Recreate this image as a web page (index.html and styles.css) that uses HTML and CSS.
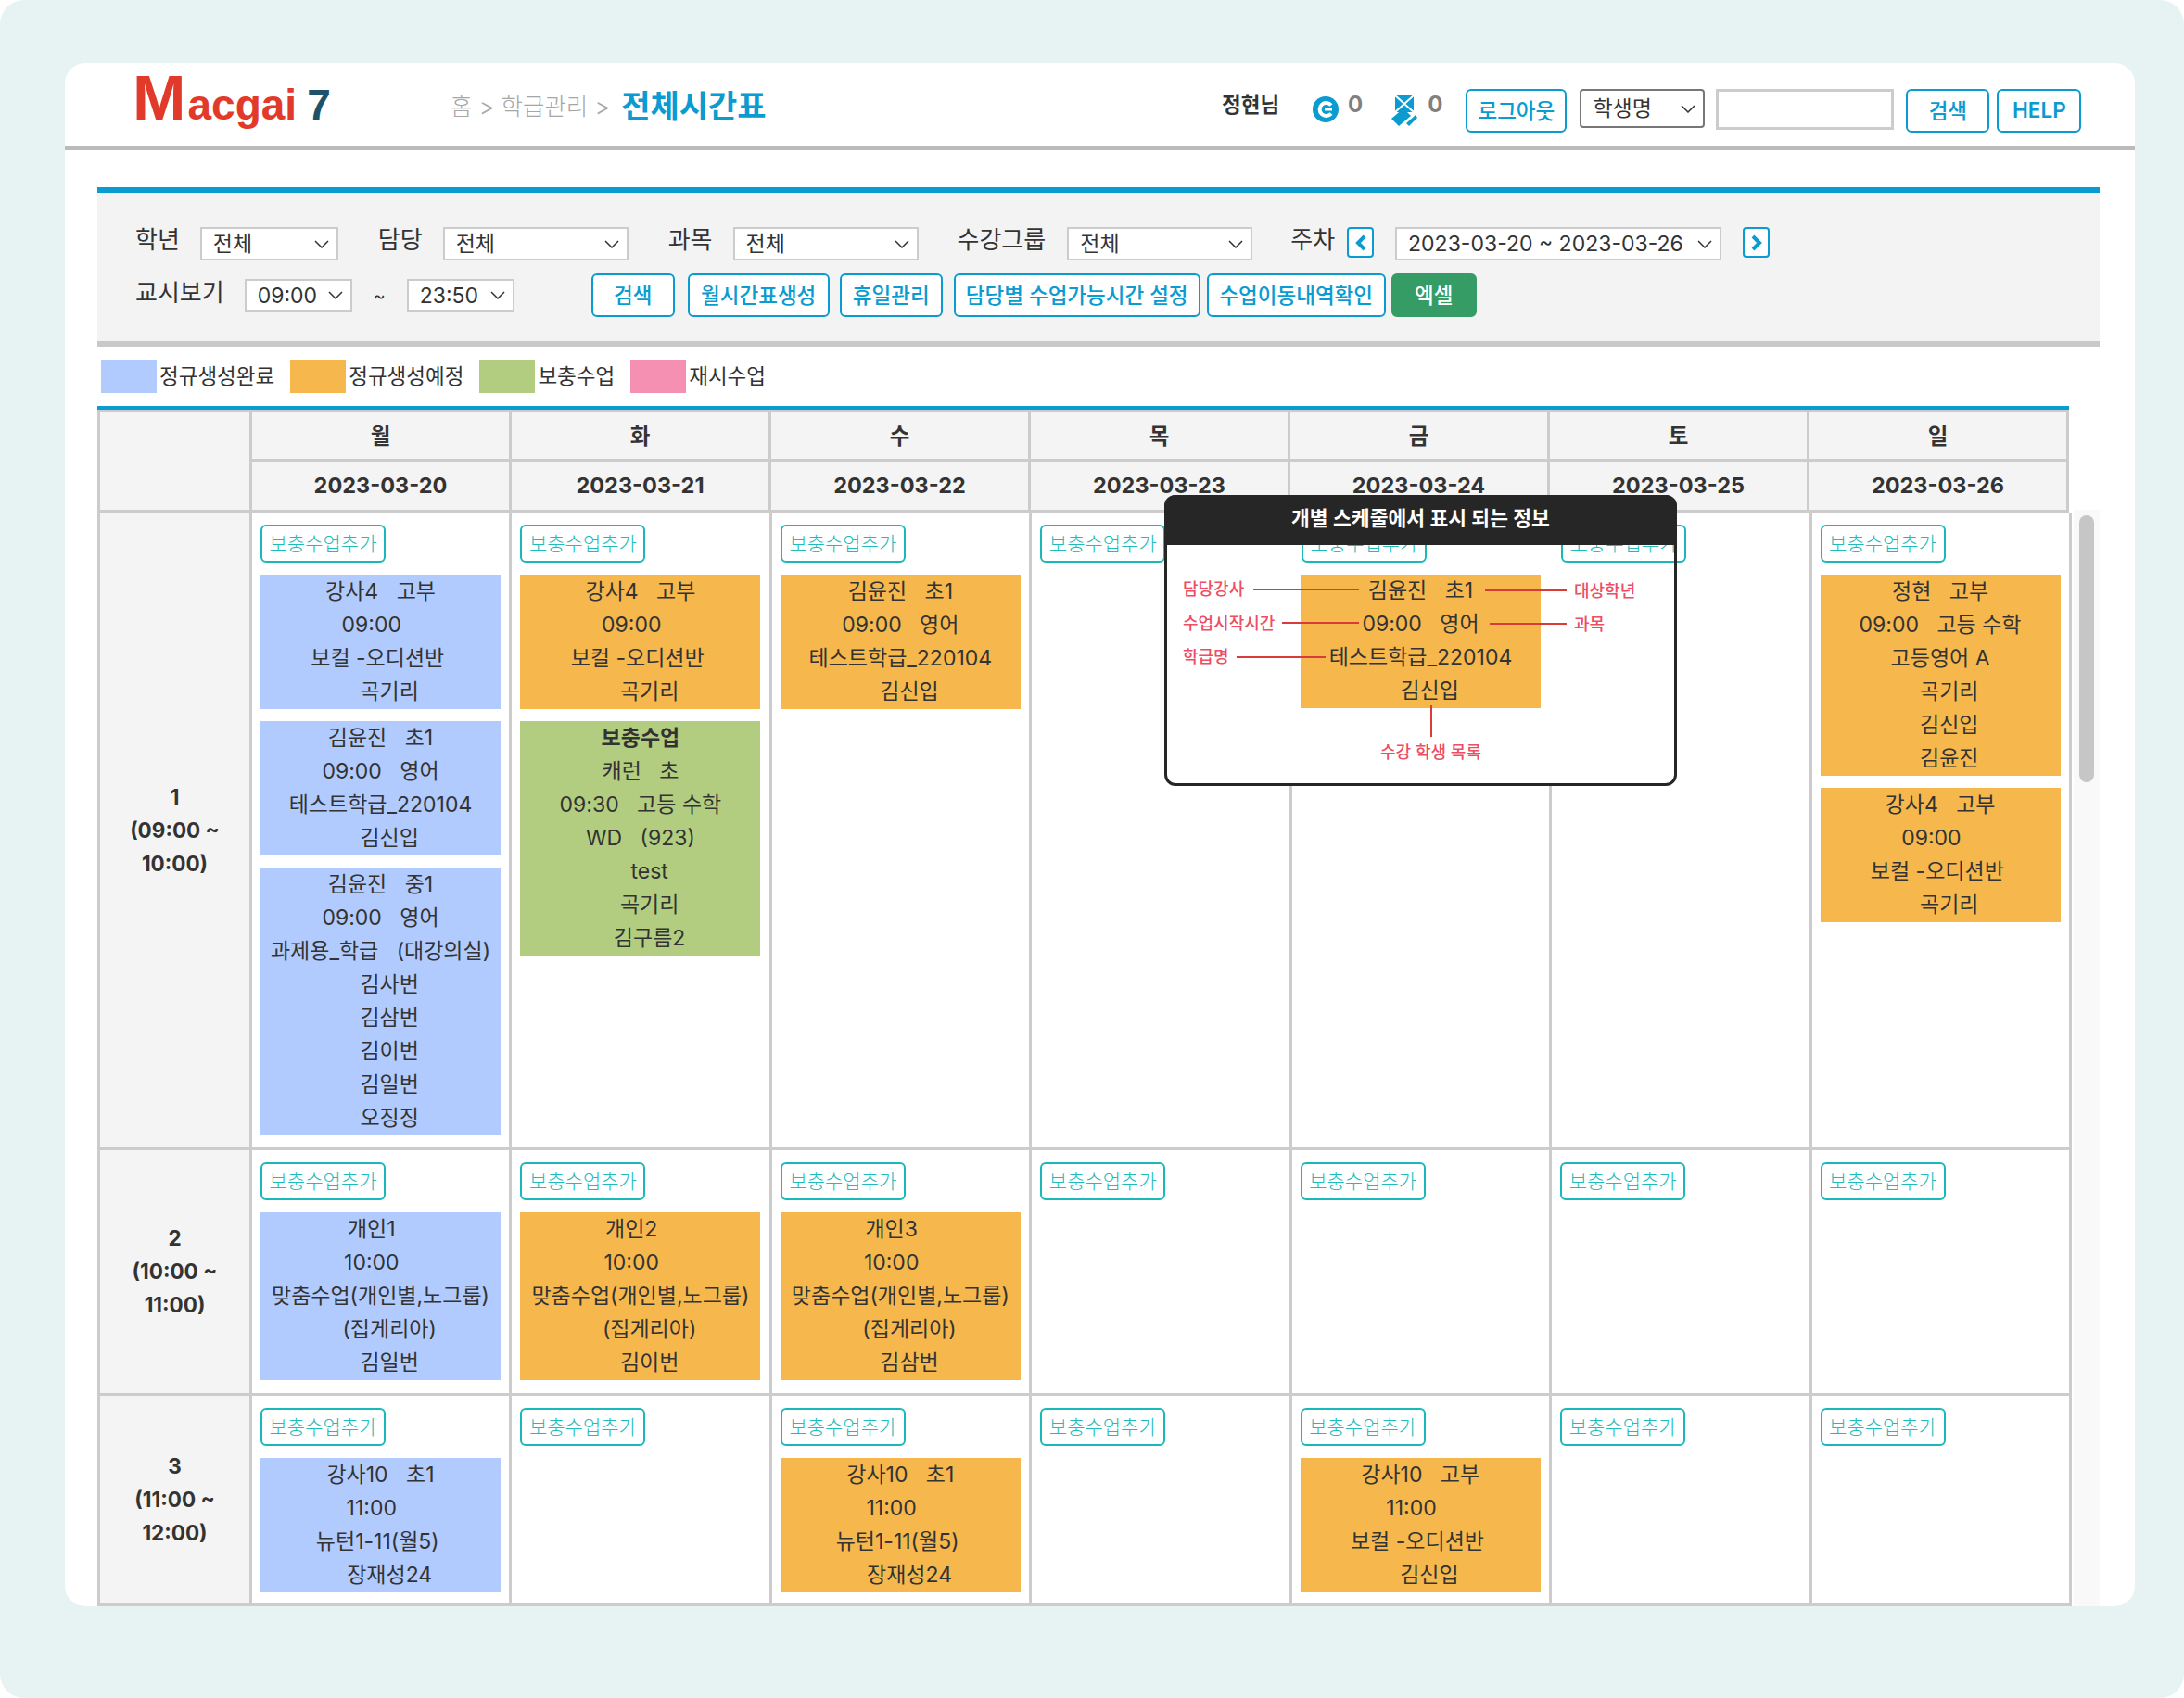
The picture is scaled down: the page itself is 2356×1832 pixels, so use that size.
FILE: index.html
```html
<!DOCTYPE html>
<html lang="ko">
<head>
  <meta charset="UTF-8" />
  <title>전체시간표</title>
  <link rel="stylesheet" href="styles.css">
</head>
<body>
<div class="screen">
  <div class="card">

    <!-- 상단 헤더 -->
    <header class="top">
      <div class="logo"><span class="logo-m">M</span><span class="logo-rest">acgai</span><span class="logo-7">7</span></div>
      <nav class="crumb">
        <span>홈 &gt; 학급관리 &gt;</span>
        <strong>전체시간표</strong>
      </nav>
      <div class="user">
        <b class="user-name">정현님</b>
        <svg class="ico-coin" viewBox="0 0 28 28">
          <circle cx="14" cy="14" r="14" fill="#0a9bd0" />
          <path d="M20 9.5A7 7 0 1 0 20 18.5" fill="none" stroke="#fff" stroke-width="4" />
          <path d="M13 14H21" stroke="#fff" stroke-width="3" />
        </svg>
        <span class="count">0</span>
        <svg class="ico-ribbon" viewBox="0 0 30 34">
          <rect x="5" y="0" width="20" height="18" fill="#0a9bd0" />
          <path d="M5 0L25 18M25 0L5 18" stroke="#fff" stroke-width="2" />
          <path d="M1 25L14 14L22 22L9 33Z" fill="#0a9bd0" />
          <path d="M17 30L27 21L29 24L20 33Z" fill="#0a9bd0" />
        </svg>
        <span class="count">0</span>
        <button class="btn btn-logout">로그아웃</button>
        <select class="sel sel-top"><option>학생명</option></select>
        <input class="top-input" type="text" />
        <button class="btn btn-find">검색</button>
        <button class="btn btn-help">HELP</button>
      </div>
    </header>

    <!-- 검색 조건 -->
    <section class="filter">
      <div class="filter-row">
        <label class="f-label">학년</label>
        <select class="sel sel-grade"><option>전체</option></select>
        <label class="f-label">담당</label>
        <select class="sel sel-wide"><option>전체</option></select>
        <label class="f-label">과목</label>
        <select class="sel sel-wide"><option>전체</option></select>
        <label class="f-label f-label-group">수강그룹</label>
        <select class="sel sel-wide"><option>전체</option></select>
        <label class="f-label f-label-week">주차</label>
        <button class="nav-btn nav-prev"><svg viewBox="0 0 12 18"><path d="M10 2L3 9L10 16" /></svg></button>
        <select class="sel sel-week"><option>2023-03-20 ~ 2023-03-26</option></select>
        <button class="nav-btn nav-next"><svg viewBox="0 0 12 18"><path d="M2 2L9 9L2 16" /></svg></button>
      </div>
      <div class="filter-row filter-row-2">
        <label class="f-label f-label-time">교시보기</label>
        <select class="sel sel-time"><option>09:00</option></select>
        <span class="tilde">~</span>
        <select class="sel sel-time"><option>23:50</option></select>
        <div class="actions">
          <button class="btn">검색</button>
          <button class="btn">월시간표생성</button>
          <button class="btn">휴일관리</button>
          <button class="btn">담당별 수업가능시간 설정</button>
          <button class="btn">수업이동내역확인</button>
          <button class="btn btn-excel">엑셀</button>
        </div>
      </div>
    </section>

    <!-- 범례 -->
    <div class="legend">
      <i class="swatch c-blue"></i><span>정규생성완료</span>
      <i class="swatch c-orange"></i><span>정규생성예정</span>
      <i class="swatch c-green"></i><span>보충수업</span>
      <i class="swatch c-pink"></i><span>재시수업</span>
    </div>

    <!-- 시간표 머리글 -->
    <div class="tt-head">
      <div class="th th-corner"></div>
      <div class="th">월</div><div class="th">화</div><div class="th">수</div><div class="th">목</div><div class="th">금</div><div class="th">토</div><div class="th">일</div>
      <div class="th">2023-03-20</div><div class="th">2023-03-21</div><div class="th">2023-03-22</div><div class="th">2023-03-23</div><div class="th">2023-03-24</div><div class="th">2023-03-25</div><div class="th">2023-03-26</div>
    </div>

    <div class="tt-wrap">
      <div class="tt-body">

        <!-- 1교시 -->
        <div class="td-time"><div>1</div><div>(09:00 ~</div><div>10:00)</div></div>
        <div class="td">
          <button class="add-btn">보충수업추가</button>
          <div class="block c-blue">
            <div>강사4 &nbsp; 고부</div><div>09:00&nbsp;&nbsp;&nbsp;</div><div>보컬 -오디션반&nbsp;</div><div>&nbsp;&nbsp;&nbsp;곡기리</div>
          </div>
          <div class="block c-blue">
            <div>김윤진 &nbsp; 초1</div><div>09:00 &nbsp; 영어</div><div>테스트학급_220104</div><div>&nbsp;&nbsp;&nbsp;김신입</div>
          </div>
          <div class="block c-blue">
            <div>김윤진 &nbsp; 중1</div><div>09:00 &nbsp; 영어</div><div>과제용_학급 &nbsp; (대강의실)</div><div>&nbsp;&nbsp;&nbsp;김사번</div><div>&nbsp;&nbsp;&nbsp;김삼번</div><div>&nbsp;&nbsp;&nbsp;김이번</div><div>&nbsp;&nbsp;&nbsp;김일번</div><div>&nbsp;&nbsp;&nbsp;오징징</div>
          </div>
        </div>
        <div class="td">
          <button class="add-btn">보충수업추가</button>
          <div class="block c-orange">
            <div>강사4 &nbsp; 고부</div><div>09:00&nbsp;&nbsp;&nbsp;</div><div>보컬 -오디션반&nbsp;</div><div>&nbsp;&nbsp;&nbsp;곡기리</div>
          </div>
          <div class="block c-green">
            <div><b>보충수업</b></div><div>캐런 &nbsp; 초</div><div>09:30 &nbsp; 고등 수학</div><div>WD &nbsp; (923)</div><div>&nbsp;&nbsp;&nbsp;test</div><div>&nbsp;&nbsp;&nbsp;곡기리</div><div>&nbsp;&nbsp;&nbsp;김구름2</div>
          </div>
        </div>
        <div class="td">
          <button class="add-btn">보충수업추가</button>
          <div class="block c-orange">
            <div>김윤진 &nbsp; 초1</div><div>09:00 &nbsp; 영어</div><div>테스트학급_220104</div><div>&nbsp;&nbsp;&nbsp;김신입</div>
          </div>
        </div>
        <div class="td"><button class="add-btn">보충수업추가</button></div>
        <div class="td"></div>
        <div class="td"></div>
        <div class="td">
          <button class="add-btn">보충수업추가</button>
          <div class="block c-orange">
            <div>정현 &nbsp; 고부</div><div>09:00 &nbsp; 고등 수학</div><div>고등영어 A</div><div>&nbsp;&nbsp;&nbsp;곡기리</div><div>&nbsp;&nbsp;&nbsp;김신입</div><div>&nbsp;&nbsp;&nbsp;김윤진</div>
          </div>
          <div class="block c-orange">
            <div>강사4 &nbsp; 고부</div><div>09:00&nbsp;&nbsp;&nbsp;</div><div>보컬 -오디션반&nbsp;</div><div>&nbsp;&nbsp;&nbsp;곡기리</div>
          </div>
        </div>

        <!-- 2교시 -->
        <div class="td-time"><div>2</div><div>(10:00 ~</div><div>11:00)</div></div>
        <div class="td">
          <button class="add-btn">보충수업추가</button>
          <div class="block c-blue">
            <div>개인1&nbsp;&nbsp;&nbsp;</div><div>10:00&nbsp;&nbsp;&nbsp;</div><div>맞춤수업(개인별,노그룹)</div><div>&nbsp;&nbsp;&nbsp;(집게리아)</div><div>&nbsp;&nbsp;&nbsp;김일번</div>
          </div>
        </div>
        <div class="td">
          <button class="add-btn">보충수업추가</button>
          <div class="block c-orange">
            <div>개인2&nbsp;&nbsp;&nbsp;</div><div>10:00&nbsp;&nbsp;&nbsp;</div><div>맞춤수업(개인별,노그룹)</div><div>&nbsp;&nbsp;&nbsp;(집게리아)</div><div>&nbsp;&nbsp;&nbsp;김이번</div>
          </div>
        </div>
        <div class="td">
          <button class="add-btn">보충수업추가</button>
          <div class="block c-orange">
            <div>개인3&nbsp;&nbsp;&nbsp;</div><div>10:00&nbsp;&nbsp;&nbsp;</div><div>맞춤수업(개인별,노그룹)</div><div>&nbsp;&nbsp;&nbsp;(집게리아)</div><div>&nbsp;&nbsp;&nbsp;김삼번</div>
          </div>
        </div>
        <div class="td"><button class="add-btn">보충수업추가</button></div>
        <div class="td"><button class="add-btn">보충수업추가</button></div>
        <div class="td"><button class="add-btn">보충수업추가</button></div>
        <div class="td"><button class="add-btn">보충수업추가</button></div>

        <!-- 3교시 -->
        <div class="td-time"><div>3</div><div>(11:00 ~</div><div>12:00)</div></div>
        <div class="td">
          <button class="add-btn">보충수업추가</button>
          <div class="block c-blue">
            <div>강사10 &nbsp; 초1</div><div>11:00&nbsp;&nbsp;&nbsp;</div><div>뉴턴1-11(월5)&nbsp;</div><div>&nbsp;&nbsp;&nbsp;장재성24</div>
          </div>
        </div>
        <div class="td"><button class="add-btn">보충수업추가</button></div>
        <div class="td">
          <button class="add-btn">보충수업추가</button>
          <div class="block c-orange">
            <div>강사10 &nbsp; 초1</div><div>11:00&nbsp;&nbsp;&nbsp;</div><div>뉴턴1-11(월5)&nbsp;</div><div>&nbsp;&nbsp;&nbsp;장재성24</div>
          </div>
        </div>
        <div class="td"><button class="add-btn">보충수업추가</button></div>
        <div class="td">
          <button class="add-btn">보충수업추가</button>
          <div class="block c-orange">
            <div>강사10 &nbsp; 고부</div><div>11:00&nbsp;&nbsp;&nbsp;</div><div>보컬 -오디션반&nbsp;</div><div>&nbsp;&nbsp;&nbsp;김신입</div>
          </div>
        </div>
        <div class="td"><button class="add-btn">보충수업추가</button></div>
        <div class="td"><button class="add-btn">보충수업추가</button></div>
      </div>

      <div class="scroll"><div class="scroll-thumb"></div></div>
    </div>

    <!-- 안내 팝업 -->
    <div class="popup">
      <div class="popup-canvas">
        <button class="add-btn pop-fri">보충수업추가</button>
        <button class="add-btn pop-sat">보충수업추가</button>
        <div class="block c-orange pop-block">
          <div>김윤진 &nbsp; 초1</div><div>09:00 &nbsp; 영어</div><div>테스트학급_220104</div><div>&nbsp;&nbsp;&nbsp;김신입</div>
        </div>
        <span class="note n1">담당강사</span><i class="line l1"></i>
        <span class="note n2">수업시작시간</span><i class="line l2"></i>
        <span class="note n3">학급명</span><i class="line l3"></i>
        <span class="note n4">대상학년</span><i class="line l4"></i>
        <span class="note n5">과목</span><i class="line l5"></i>
        <i class="line l6"></i><span class="note n6">수강 학생 목록</span>
      </div>
      <div class="popup-title">개별 스케줄에서 표시 되는 정보</div>
    </div>

  </div>
</div>
</body>
</html>
```

FILE: styles.css
```css
* {
  box-sizing: border-box;
}
html, body {
  margin: 0;
  background: #fff;
}
body {
  font-family: Inter, "Noto Sans CJK KR", sans-serif;
  color: #333;
  font-size: 22px;
}
button, select, input {
  font-family: inherit;
}
.screen {
  width: 2356px;
  height: 1832px;
  padding: 68px 53px 100px 70px;
  background: #e7f3f3;
  border-radius: 26px;
}
.card {
  position: relative;
  width: 2233px;
  height: 1665px;
  background: #fff;
  border-radius: 22px;
  overflow: hidden;
}

/* header */
.top {
  display: flex;
  align-items: flex-start;
  height: 94px;
  border-bottom: 4px solid #bbb;
}
.logo {
  width: 343px;
  margin-left: 73px;
  display: flex;
  align-items: baseline;
  height: 76px;
  font-family: "Liberation Sans", sans-serif;
  font-weight: bold;
  color: #e23a2a;
  line-height: 76px;
}
.logo-m {
  font-size: 69px;
}
.logo-rest {
  font-size: 46px;
  margin-left: 2px;
}
.logo-7 {
  font-size: 46px;
  margin-left: 11px;
  color: #1d5268;
}
.crumb {
  width: 832px;
  display: flex;
  align-items: center;
  gap: 12px;
  height: 94px;
  margin-top: -3px;
  color: #a6a6a6;
  font-size: 25.5px;
  font-weight: 300;
}
.crumb strong {
  font-size: 34px;
  font-weight: 700;
  color: #0a9bd0;
}
.user {
  display: flex;
  align-items: flex-start;
  padding-top: 28px;
}
.user-name {
  font-size: 22.5px;
  line-height: 34px;
  width: 98px;
}
.ico-coin {
  width: 28px;
  height: 28px;
  margin-top: 8px;
}
.count {
  font-size: 24px;
  font-weight: 700;
  line-height: 34px;
  color: #808080;
  margin-left: 10px;
}
.ico-ribbon {
  width: 30px;
  height: 34px;
  margin: 7px 0 0 30px;
}
.btn {
  height: 47px;
  padding: 0 0 3px;
  background: #fff;
  border: 2px solid #0a9bd0;
  border-radius: 6px;
  color: #0a9bd0;
  font-size: 22.5px;
  font-weight: 500;
}
.btn-logout {
  width: 109px;
  margin-left: 25px;
}
.top-input {
  width: 192px;
  height: 44px;
  margin-left: 12px;
  border: 3px solid #ccc;
}
.btn-find {
  width: 90px;
  margin-left: 13px;
}
.btn-help {
  width: 91px;
  margin-left: 8px;
  font-weight: 600;
}

/* filter */
.filter {
  width: 2160px;
  height: 172px;
  margin: 40px 0 0 35px;
  padding: 37px 0 0 41px;
  background: #f3f3f3;
  border-top: 6px solid #0a9bd0;
  border-bottom: 6px solid #c9c9c9;
}
.filter-row {
  display: flex;
  align-items: flex-start;
}
.filter-row-2 {
  margin-top: 14px;
  align-items: center;
}
.f-label {
  font-size: 26px;
  line-height: 28px;
  margin-right: 22px;
}
.f-label-group {
  margin-left: -1px;
  margin-right: 23px;
}
.f-label-week {
  margin-right: 13px;
}
.f-label-time {
  margin-bottom: 6px;
}
.sel {
  height: 36px;
  padding: 0 0 0 12px;
  background: #fff url("data:image/svg+xml,%3Csvg xmlns='http://www.w3.org/2000/svg' width='16' height='9'%3E%3Cpath d='M1 1L8 8L15 1' fill='none' stroke='%23333' stroke-width='1.5'/%3E%3C/svg%3E") no-repeat right 8px center;
  border: 2px solid #ccc;
  color: #333;
  font-size: 23px;
  appearance: none;
}
.sel-grade {
  width: 149px;
  margin-right: 43px;
}
.sel-wide {
  width: 200px;
  margin-right: 43px;
}
.sel-week {
  width: 352px;
  margin: 0 23px;
}
.sel-time {
  width: 116px;
}
.sel.sel-top {
  width: 135px;
  height: 42px;
  margin-left: 14px;
  border: 2px solid #777;
  border-radius: 4px;
}
.filter-row .sel:nth-of-type(4) {
  margin-right: 41px;
}
.nav-btn {
  width: 29px;
  height: 33px;
  padding: 0;
  background: #fff;
  border: 2px solid #0a9bd0;
  border-radius: 4px;
  display: flex;
  align-items: center;
  justify-content: center;
}
.nav-btn svg {
  width: 12px;
  height: 18px;
}
.nav-btn path {
  fill: none;
  stroke: #0a9bd0;
  stroke-width: 4;
}
.tilde {
  width: 59px;
  text-align: center;
  font-size: 20px;
}
.actions {
  display: flex;
  margin-left: 83px;
}
.actions .btn:nth-child(1) { width: 90px; }
.actions .btn:nth-child(2) { width: 153px; margin-left: 14px; }
.actions .btn:nth-child(3) { width: 111px; margin-left: 11px; }
.actions .btn:nth-child(4) { width: 266px; margin-left: 12px; }
.actions .btn:nth-child(5) { width: 193px; margin-left: 7px; }
.actions .btn:nth-child(6) { width: 92px; margin-left: 6px; }
.btn.btn-excel {
  background: #359c66;
  border-color: #359c66;
  color: #fff;
}

/* legend */
.legend {
  display: flex;
  align-items: center;
  height: 64px;
  margin-left: 39px;
  font-size: 22.5px;
}
.swatch {
  width: 60px;
  height: 36px;
  margin-right: 3px;
}
.legend span {
  margin: 0 17px 5px 0;
}
.c-blue { background: #b1cbfe; }
.c-orange { background: #f6b84d; }
.c-green { background: #b2cd80; }
.c-pink { background: #f590b3; }

/* timetable */
.tt-head {
  display: grid;
  grid-template-columns: 167px repeat(7, 280px);
  grid-template-rows: 56px 55px;
  width: 2127px;
  margin-left: 35px;
  background: #f4f4f4;
  border-top: 4px solid #0a9bd0;
  font-size: 23.5px;
  font-weight: 700;
}
.th {
  display: flex;
  align-items: center;
  justify-content: center;
  padding-bottom: 2px;
  border-right: 3px solid #ccc;
  border-bottom: 3px solid #ccc;
}
.th:nth-child(-n+8) {
  border-top: 3px solid #ccc;
}
.th-corner {
  grid-row: 1 / 3;
  border-left: 3px solid #ccc;
}
.tt-wrap {
  display: flex;
  margin-left: 35px;
}
.tt-body {
  display: grid;
  grid-template-columns: 167px repeat(7, 1fr);
  grid-template-rows: 688px 265px 227px;
  width: 2130px;
}
.td {
  padding: 13px 0 0 9px;
  border-right: 3px solid #ccc;
  border-bottom: 3px solid #ccc;
}
.td-time {
  display: flex;
  flex-direction: column;
  justify-content: center;
  align-items: center;
  line-height: 36px;
  font-size: 22.5px;
  font-weight: 700;
  background: #f4f4f4;
  border-left: 3px solid #ccc;
  border-right: 3px solid #ccc;
  border-bottom: 3px solid #ccc;
}
.add-btn {
  display: block;
  width: 135px;
  height: 41px;
  padding: 0 0 3px;
  background: #fff;
  border: 2px solid #1ab8b8;
  border-radius: 6px;
  color: #1fbcbc;
  font-size: 21px;
  font-weight: 300;
}
.block {
  width: 259px;
  margin-top: 14px;
  padding-bottom: 1px;
  text-align: center;
  line-height: 36px;
  font-size: 23px;
}
.block div:first-child {
  margin-top: -1px;
}
.scroll {
  width: 28px;
  margin: -3px 0 0 2px;
  padding: 6px 0 0 6px;
  background: #f9f9f9;
}
.scroll-thumb {
  width: 16px;
  height: 288px;
  background: #c6c6c6;
  border-radius: 8px;
}

/* popup */
.popup {
  position: absolute;
  left: 1186px;
  top: 466px;
  width: 553px;
  height: 314px;
  background: #fff;
  border-radius: 12px;
}
.popup::after {
  content: "";
  position: absolute;
  inset: 0;
  z-index: 3;
  border: 3px solid #262626;
  border-radius: 12px;
}
.popup-title {
  position: absolute;
  left: 0;
  top: 0;
  z-index: 2;
  width: 100%;
  height: 54px;
  background: #262626;
  border-radius: 12px 12px 0 0;
  color: #fff;
  font-size: 21.5px;
  font-weight: 600;
  line-height: 50px;
  text-align: center;
}
.popup-canvas {
  position: absolute;
  inset: 3px;
}
.popup-canvas > * {
  position: absolute;
}
.pop-fri { left: 145px; top: 29px; }
.pop-sat { left: 425px; top: 29px; }
.popup-canvas .pop-block {
  left: 144px;
  top: 83px;
  margin: 0;
}
.note {
  color: #ee4d63;
  font-size: 18px;
  font-weight: 500;
  line-height: 24px;
}
.n1 { left: 17px; top: 87px; }
.n2 { left: 17px; top: 124px; }
.n3 { left: 17px; top: 160px; }
.n4 { left: 439px; top: 89px; }
.n5 { left: 439px; top: 125px; }
.n6 { left: 230px; top: 263px; }
.line {
  background: #d93a3a;
  height: 2px;
}
.l1 { left: 93px; top: 98px; width: 114px; }
.l2 { left: 124px; top: 134px; width: 83px; }
.l3 { left: 75px; top: 171px; width: 96px; }
.l4 { left: 343px; top: 99px; width: 88px; }
.l5 { left: 348px; top: 135px; width: 83px; }
.l6 { left: 284px; top: 224px; width: 2px; height: 34px; }
```
